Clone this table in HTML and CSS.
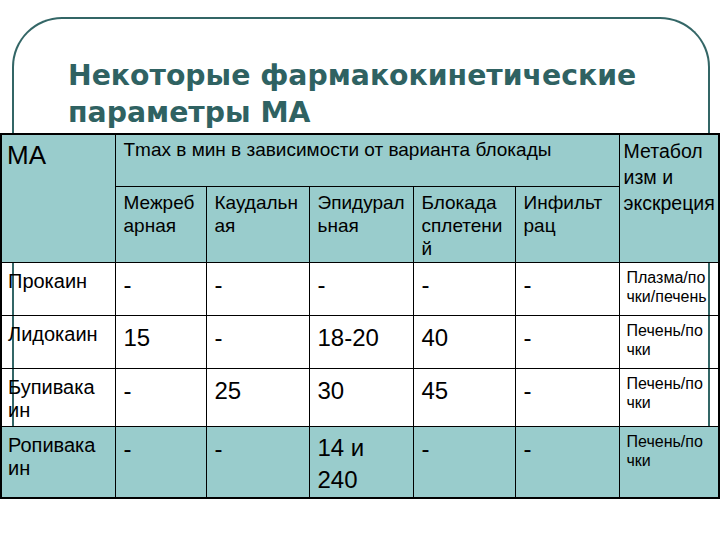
FILE: index.html
```html
<!DOCTYPE html>
<html lang="ru">
<head>
<meta charset="utf-8">
<title>Некоторые фармакокинетические параметры МА</title>
<link rel="stylesheet" href="styles.css">
</head>
<body>
<div class="frame">
  <h1 class="title">Некоторые фармакокинетические<br>параметры МА</h1>
  <table class="pk">
    <colgroup>
      <col class="c1"><col class="c2"><col class="c3"><col class="c4"><col class="c5"><col class="c6"><col class="c7">
    </colgroup>
    <tr class="rh1">
      <td class="teal ma" rowspan="2">МА</td>
      <td class="teal tmax" colspan="5">Tmax в мин в зависимости от варианта блокады</td>
      <td class="teal metab" rowspan="2">Метабол<br>изм и<br>экскреция</td>
    </tr>
    <tr class="rh2">
      <td class="teal sub">Межреб<br>арная</td>
      <td class="teal sub">Каудальн<br>ая</td>
      <td class="teal sub">Эпидурал<br>ьная</td>
      <td class="teal sub">Блокада<br>сплетени<br>й</td>
      <td class="teal sub">Инфильт<br>рац</td>
    </tr>
    <tr class="rb1">
      <td class="name">Прокаин</td>
      <td class="dash">-</td>
      <td class="dash">-</td>
      <td class="dash">-</td>
      <td class="dash">-</td>
      <td class="dash">-</td>
      <td class="met">Плазма/по<br>чки/печень</td>
    </tr>
    <tr class="rb2">
      <td class="name">Лидокаин</td>
      <td class="num">15</td>
      <td class="dash">-</td>
      <td class="num">18-20</td>
      <td class="num">40</td>
      <td class="dash">-</td>
      <td class="met">Печень/по<br>чки</td>
    </tr>
    <tr class="rb3">
      <td class="name">Бупивака<br>ин</td>
      <td class="dash">-</td>
      <td class="num">25</td>
      <td class="num">30</td>
      <td class="num">45</td>
      <td class="dash">-</td>
      <td class="met">Печень/по<br>чки</td>
    </tr>
    <tr class="rb4">
      <td class="teal name">Ропивака<br>ин</td>
      <td class="teal dash">-</td>
      <td class="teal dash">-</td>
      <td class="teal num two">14 и<br>240</td>
      <td class="teal dash">-</td>
      <td class="teal dash">-</td>
      <td class="teal met">Печень/по<br>чки</td>
    </tr>
  </table>
</div>
</body>
</html>
```

FILE: styles.css
```css
html, body {
  margin: 0;
  padding: 0;
  background: #ffffff;
}

body {
  width: 720px;
  height: 540px;
  overflow: hidden;
  font-family: "Liberation Sans", Arial, sans-serif;
  color: #000000;
}

.frame {
  box-sizing: border-box;
  margin: 17px 0 0 12px;
  width: 698px;
  border: 2px solid #336666;
  border-bottom: none;
  border-radius: 50px 50px 0 0;
}

.title {
  margin: 38px 0 0 54px;
  font-family: "DejaVu Sans", "Liberation Sans", sans-serif;
  font-weight: bold;
  font-size: 28.3px;
  line-height: 37px;
  color: #2f6262;
  white-space: nowrap;
}

.pk {
  margin: 2px 0 0 -14px;
  width: 718px;
  table-layout: fixed;
  border-collapse: collapse;
  border: 2px solid #000000;
}

.c1 { width: 114px; }
.c2 { width: 91px; }
.c3 { width: 103px; }
.c4 { width: 104px; }
.c5 { width: 102px; }
.c6 { width: 104px; }
.c7 { width: 100px; }

.rh1 { height: 52px; }
.rh2 { height: 76px; }
.rb1 { height: 53px; }
.rb2 { height: 53px; }
.rb3 { height: 58px; }
.rb4 { height: 72px; }

.pk td {
  border: 1px solid #000000;
  vertical-align: top;
  padding: 6px 4px 0 8px;
  white-space: nowrap;
  overflow: hidden;
  font-size: 20px;
  line-height: 23px;
}

.pk td.teal {
  background: #99cccc;
}

.pk td.ma {
  font-size: 26px;
  line-height: 30px;
  padding: 5px 4px 0 5px;
}

.pk td.tmax {
  font-size: 19px;
  line-height: 22px;
  padding-top: 4px;
}

.pk td.metab {
  font-size: 19.5px;
  line-height: 26px;
  padding: 3px 0 0 4px;
}

.pk td.sub {
  font-size: 19px;
  line-height: 23px;
  padding-top: 4px;
}

.pk td.name {
  padding-left: 6px;
  padding-top: 7px;
}

.pk td.num,
.pk td.dash {
  font-size: 24px;
  line-height: 30px;
  padding-top: 7px;
}

.pk td.num.two {
  line-height: 32px;
  padding-top: 5px;
}

.pk td.met {
  font-size: 16px;
  line-height: 19px;
  padding: 5px 0 0 7px;
}
```
